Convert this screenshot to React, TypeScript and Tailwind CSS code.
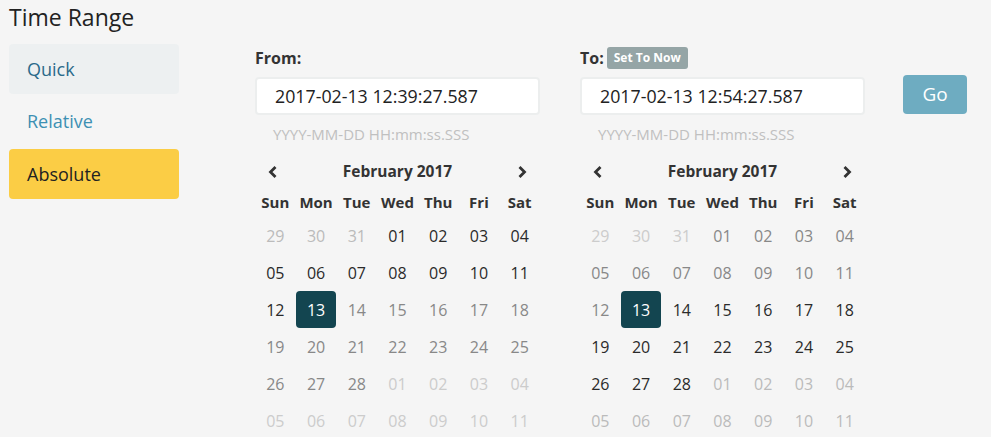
import React from "react"

const weekdays = ["Sun", "Mon", "Tue", "Wed", "Thu", "Fri", "Sat"]

type Day = { label: string; tone: "dark" | "mid" | "light" | "faint" | "selected" }

function buildDays(side: "from" | "to"): Day[] {
  const days: Day[] = []
  for (const d of ["29", "30", "31"]) {
    days.push({ label: d, tone: side === "from" ? "light" : "faint" })
  }
  for (let i = 1; i <= 28; i++) {
    const label = i < 10 ? `0${i}` : `${i}`
    let tone: Day["tone"]
    if (i === 13) tone = "selected"
    else if (side === "from") tone = i < 13 ? "dark" : "mid"
    else tone = i < 13 ? "mid" : "dark"
    days.push({ label, tone })
  }
  for (let i = 1; i <= 11; i++) {
    const label = i < 10 ? `0${i}` : `${i}`
    days.push({ label, tone: side === "from" ? "faint" : "light" })
  }
  return days
}

const toneClass: Record<Day["tone"], string> = {
  dark: "text-[#2a2a2a]",
  mid: "text-[#888]",
  light: "text-[#bbb]",
  faint: "text-[#ccc]",
  selected: "bg-[#134550] text-white rounded-[4px]",
}

function Chevron({ dir }: { dir: "left" | "right" }) {
  return (
    <svg width="10" height="14" viewBox="0 0 10 14" className="text-[#333]">
      <polyline
        points={dir === "left" ? "7.5,2 2.5,7 7.5,12" : "2.5,2 7.5,7 2.5,12"}
        fill="none"
        stroke="currentColor"
        strokeWidth="2.8"
      />
    </svg>
  )
}

function Calendar({ side }: { side: "from" | "to" }) {
  const days = buildDays(side)
  return (
    <div className="mt-[12px] w-[285px]">
      <div className="flex h-[32px] items-center justify-between px-[13px]">
        <Chevron dir="left" />
        <span className="text-[15.5px] font-bold text-[#333]">February 2017</span>
        <Chevron dir="right" />
      </div>
      <div className="grid h-[29px] grid-cols-7 items-center">
        {weekdays.map((w) => (
          <span key={w} className="text-center text-[15px] font-bold text-[#333]">
            {w}
          </span>
        ))}
      </div>
      <div className="grid grid-cols-7">
        {days.map((d, i) => (
          <span
            key={i}
            className={`flex h-[37px] items-center justify-center text-[16px] ${toneClass[d.tone]}`}
          >
            {d.label}
          </span>
        ))}
      </div>
    </div>
  )
}

function DatePanel({ side, value }: { side: "from" | "to"; value: string }) {
  return (
    <div className="w-[285px]">
      <div className="flex h-[28px] items-center gap-[3px]">
        <span className="text-[16px] font-bold text-[#333]">{side === "from" ? "From:" : "To:"}</span>
        {side === "to" && (
          <span className="flex h-[22px] items-center rounded-[3px] bg-[#95a5a6] px-[7px] text-[12px] font-bold text-white">
            Set To Now
          </span>
        )}
      </div>
      <div className="mt-[5px] flex h-[38px] items-center rounded-[4px] border-2 border-[#eceeee] bg-white px-[18px] text-[17.8px] text-[#222]">
        {value}
      </div>
      <div className="mt-[9px] h-[20px] pl-[18px] text-[15px] leading-[20px] text-[#c0c0c0]">
        YYYY-MM-DD HH:mm:ss.SSS
      </div>
      <Calendar side={side} />
    </div>
  )
}

export default function App() {
  return (
    <div
      className="h-[437px] w-[991px] overflow-hidden bg-[#f5f5f5]"
      style={{ fontFamily: '"Open Sans", sans-serif' }}
    >
      <h1 className="pl-[9px] pt-[2px] text-[23px] leading-[30px] text-[#222]">Time Range</h1>
      <div className="mt-[12px] flex">
        <nav className="ml-[9px] flex w-[170px] flex-col gap-[2.5px]">
          <div className="flex h-[50px] items-center rounded-[4px] bg-[#edf0f1] px-[18px] text-[18px] text-[#2a6a8a]">
            Quick
          </div>
          <div className="flex h-[50px] items-center px-[18px] text-[18px] text-[#3d90b3]">Relative</div>
          <div className="flex h-[50px] items-center rounded-[4px] bg-[#fbcd45] px-[18px] text-[18px] text-[#222]">
            Absolute
          </div>
        </nav>
        <div className="ml-[76px] flex gap-[40px]">
          <DatePanel side="from" value="2017-02-13 12:39:27.587" />
          <DatePanel side="to" value="2017-02-13 12:54:27.587" />
        </div>
        <div className="ml-[38px] mt-[31px]">
          <button className="h-[39px] w-[64px] rounded-[4px] bg-[#6eacc1] text-[19px] text-white">Go</button>
        </div>
      </div>
    </div>
  )
}
